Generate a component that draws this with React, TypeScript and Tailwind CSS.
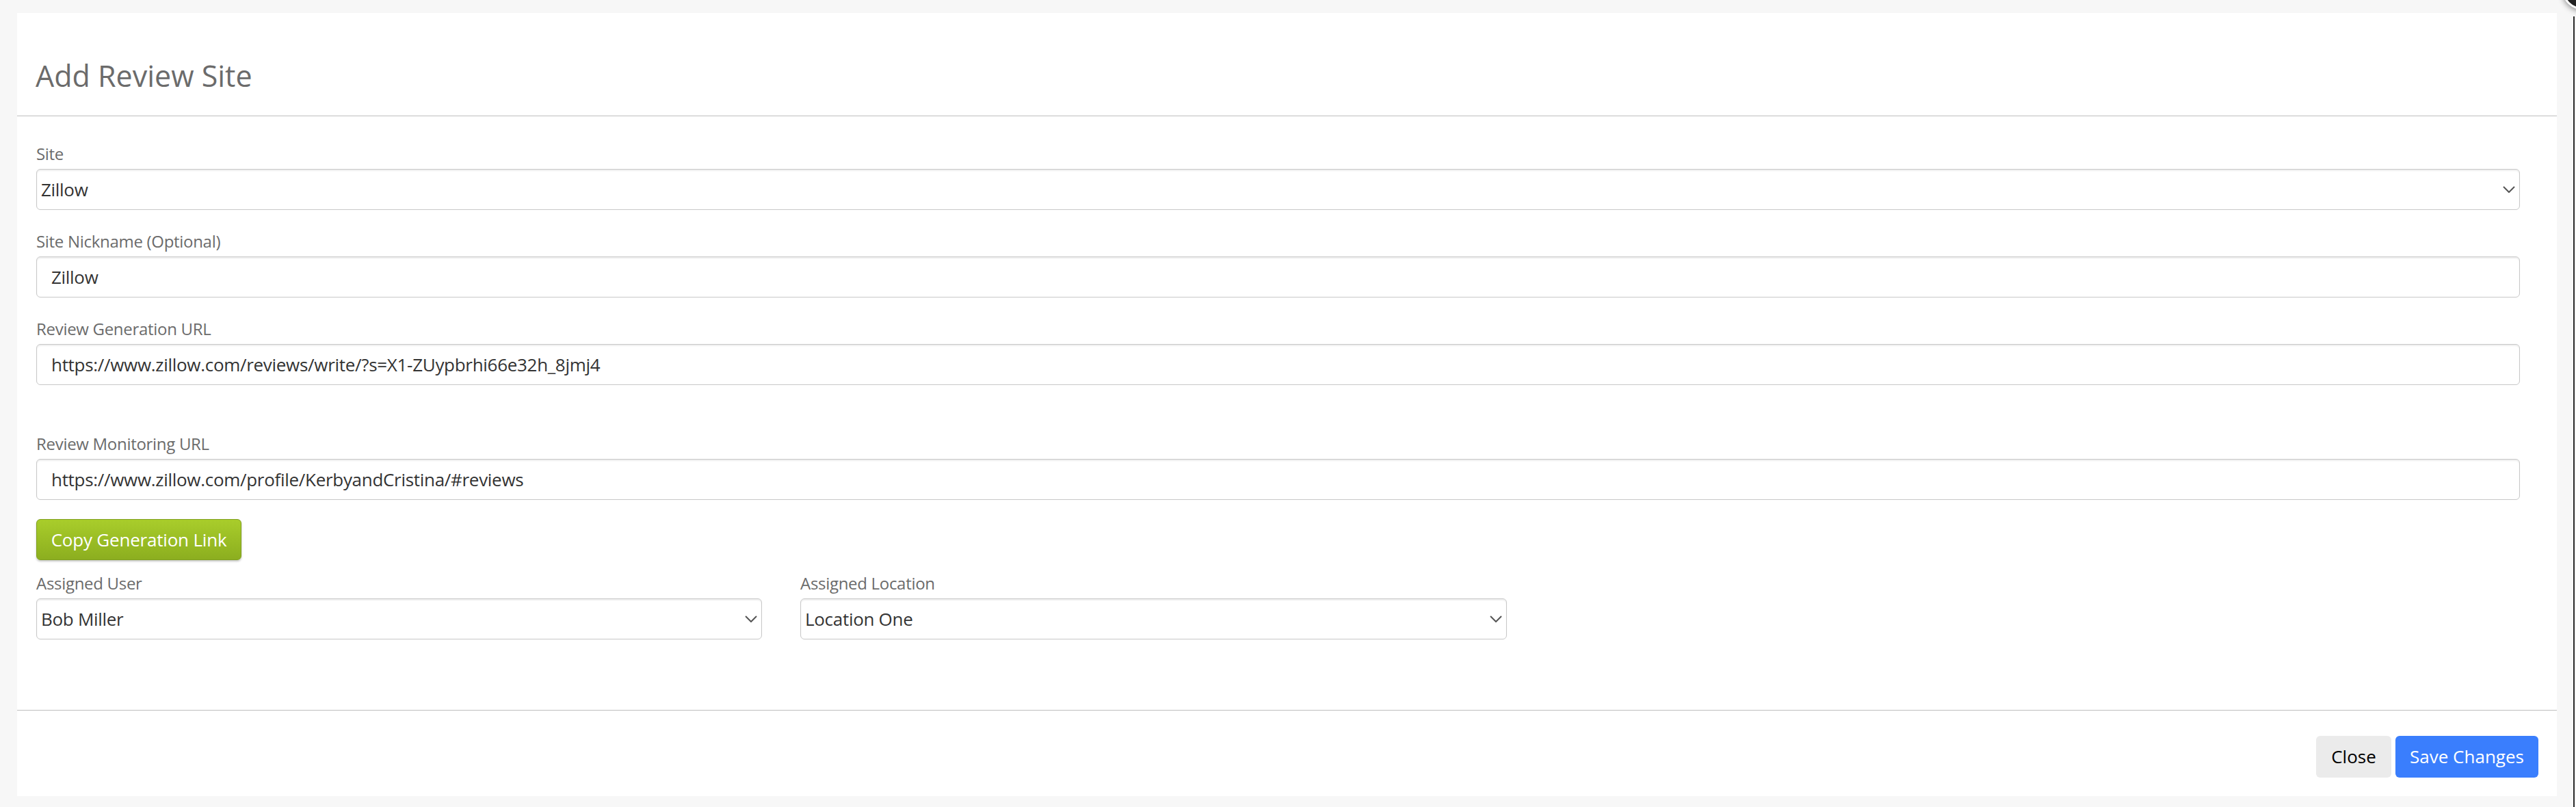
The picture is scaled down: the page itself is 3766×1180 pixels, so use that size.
import { ReactNode } from "react"

const font = { fontFamily: '"Open Sans", "Noto Sans", sans-serif' }

function Chevron() {
    return (
        <svg
            className="absolute right-[7px] top-1/2 -translate-y-1/2 pointer-events-none"
            width="18"
            height="11"
            viewBox="0 0 18 11"
            fill="none"
        >
            <path d="M1 1.5 L9 9.5 L17 1.5" stroke="#555" strokeWidth="2" />
        </svg>
    )
}

function Label({ children }: { children: ReactNode }) {
    return <div className="text-[24px] leading-[34px] tracking-[-0.3px] text-[#6b6b6b] mb-[5px]">{children}</div>
}

function SelectBox({ value }: { value: string }) {
    return (
        <div className="relative h-[60px] w-full">
            <select
                defaultValue={value}
                className="
          appearance-none w-full h-full
          border border-[#c8c8c8] rounded-[6px]
          pl-[6px] pr-[30px]
          text-[26px] tracking-[-0.3px] text-[#333] bg-white
          shadow-[inset_0_2px_2px_rgba(0,0,0,0.07)]
          outline-none
        "
                style={font}
            >
                <option>{value}</option>
            </select>
            <Chevron />
        </div>
    )
}

function TextBox({ value }: { value: string }) {
    return (
        <input
            readOnly
            value={value}
            className="
        w-full h-[60px]
        border border-[#c8c8c8] rounded-[6px]
        px-[21px]
        text-[26px] tracking-[-0.3px] text-[#333] bg-white
        shadow-[inset_0_2px_2px_rgba(0,0,0,0.07)]
        outline-none
      "
            style={font}
        />
    )
}

export default function App() {
    return (
        <div className="relative min-h-[1180px] bg-[#f7f7f7] pt-[19px] pl-[25px] overflow-hidden" style={font}>

            {/* modal */}
            <div className="w-[3713px] h-[1145px] bg-white flex flex-col">

                <div className="h-[151px] shrink-0 border-b border-[#bdbdbd] pt-[61px] pl-[27px]">
                    <h1 className="text-[43px] leading-[62px] text-[#6b6b6b] font-normal">Add Review Site</h1>
                </div>

                <div className="flex-1 pl-[28px] pr-[54px] pt-[38px]">

                    <Label>Site</Label>
                    <SelectBox value="Zillow" />

                    <div className="mt-[29px]">
                        <Label>Site Nickname (Optional)</Label>
                        <TextBox value="Zillow" />
                    </div>

                    <div className="mt-[29px]">
                        <Label>Review Generation URL</Label>
                        <TextBox value="https://www.zillow.com/reviews/write/?s=X1-ZUypbrhi66e32h_8jmj4" />
                    </div>

                    <div className="mt-[69px]">
                        <Label>Review Monitoring URL</Label>
                        <TextBox value="https://www.zillow.com/profile/KerbyandCristina/#reviews" />
                    </div>

                    <button
                        className="
              mt-[28px] h-[60px] w-[300px]
              rounded-[6px] border border-[#7f9f1d]
              bg-linear-to-b from-[#a9cd2b] to-[#8cae1f]
              text-[26px] tracking-[-0.2px] text-white
              shadow-[0_2px_3px_rgba(0,0,0,0.22)]
            "
                    >
                        Copy Generation Link
                    </button>

                    <div className="mt-[17px] flex gap-[56px]">
                        <div className="w-[1061px]">
                            <Label>Assigned User</Label>
                            <SelectBox value="Bob Miller" />
                        </div>
                        <div className="w-[1033px]">
                            <Label>Assigned Location</Label>
                            <SelectBox value="Location One" />
                        </div>
                    </div>

                </div>

                {/* footer */}
                <div className="h-[126px] shrink-0 border-t border-[#bdbdbd] pt-[37px] pr-[27px] flex justify-end gap-[6px]">
                    <button className="h-[61px] w-[110px] rounded-[6px] bg-[#ebebeb] text-[26px] text-black">
                        Close
                    </button>
                    <button className="h-[61px] w-[209px] rounded-[6px] bg-[#3a7efd] text-[26px] text-white">
                        Save Changes
                    </button>
                </div>

            </div>

            {/* window edge + close badge */}
            <div className="absolute top-[24px] bottom-0 left-[3762px] w-[2px] bg-[#2a2a2a]" />
            <div className="absolute left-[3746px] top-[-44px] w-[58px] h-[58px] rounded-full bg-[#222] border-[3px] border-white shadow-[0_2px_8px_rgba(0,0,0,0.45)]" />
        </div>
    )
}
